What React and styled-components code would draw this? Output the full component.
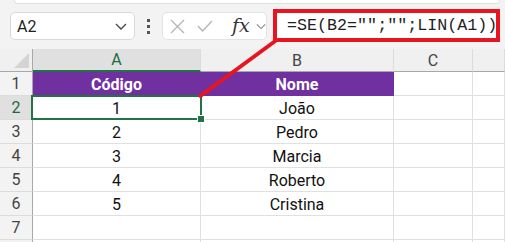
import React from "react";
import styled, { createGlobalStyle } from "styled-components";

const GlobalStyle = createGlobalStyle`
  body {
    margin: 0;
    background: #f3f3f3;
    font-family: Roboto, "Noto Sans", sans-serif;
  }
`;

const data = [
  { n: 1, a: "Código", b: "Nome", head: true },
  { n: 2, a: "1", b: "João", active: true },
  { n: 3, a: "2", b: "Pedro" },
  { n: 4, a: "3", b: "Marcia" },
  { n: 5, a: "4", b: "Roberto" },
  { n: 6, a: "5", b: "Cristina" },
  { n: 7, a: "", b: "" },
];

const Chevron = ({ w = 12, color = "#444" }) => (
  <svg width={w} height="7" viewBox="0 0 12 7">
    <polyline points="1,1 6,6 11,1" fill="none" stroke={color} strokeWidth="1.3" />
  </svg>
);

const App = () => {
  return (
    <Page>
      <GlobalStyle />
      <TopStrip />
      <Toolbar>
        <NameBox>
          <span>A2</span>
          <Chevron />
        </NameBox>
        <Dots>
          <i />
          <i />
          <i />
        </Dots>
        <FxBox>
          <svg width="15" height="15" viewBox="0 0 15 15">
            <path d="M1 1 L14 14 M14 1 L1 14" stroke="#b4b4b4" strokeWidth="1.3" />
          </svg>
          <svg width="16" height="12" viewBox="0 0 16 12" style={{ marginLeft: 12 }}>
            <polyline points="1,6 5.5,11 15,1" fill="none" stroke="#b4b4b4" strokeWidth="1.3" />
          </svg>
          <FxLabel>fx</FxLabel>
          <Chevron w={10} color="#888" />
        </FxBox>
        <FormulaBox>=SE(B2="";"";LIN(A1))</FormulaBox>
      </Toolbar>

      <Sheet>
        <Corner />
        <ColHead $active>A</ColHead>
        <ColHead>B</ColHead>
        <ColHead>C</ColHead>
        <ColHead />
        {data.map((r) => (
          <React.Fragment key={r.n}>
            <RowHead $active={r.active}>{r.n}</RowHead>
            <Cell $head={r.head} $selected={r.active}>
              {r.a}
            </Cell>
            <Cell $head={r.head}>{r.b}</Cell>
            <Cell />
            <Cell />
          </React.Fragment>
        ))}
        <RowHead />
        <Cell />
        <Cell />
        <Cell />
        <Cell />
      </Sheet>

      <Pointer width="505" height="242">
        <line x1="199" y1="97" x2="278" y2="39" stroke="#e8141f" strokeWidth="4" />
      </Pointer>
    </Page>
  );
};

export default App;

const Page = styled.div`
  position: relative;
  width: 505px;
  height: 242px;
  overflow: hidden;
  background: #f3f3f3;
`;

const TopStrip = styled.div`
  height: 3px;
  margin: 0 5px 0 14px;
  background: #fff;
  border: 1px solid #e0e0e0;
  border-top: none;
  border-radius: 0 0 5px 5px;
`;

const Toolbar = styled.div`
  display: flex;
  align-items: flex-start;
  height: 45px;
  box-sizing: border-box;
  padding: 8px 0 0 10px;
`;

const NameBox = styled.div`
  box-sizing: border-box;
  width: 125px;
  height: 28px;
  display: flex;
  align-items: center;
  justify-content: space-between;
  padding: 0 7px 0 6px;
  background: #fff;
  border: 1px solid #d9d9d9;
  border-radius: 5px;
  font-size: 16px;
  color: #1f1f1f;
`;

const Dots = styled.div`
  display: flex;
  flex-direction: column;
  gap: 3px;
  margin: 7px 12px 0;
  i {
    display: block;
    width: 3px;
    height: 3px;
    background: #555;
  }
`;

const FxBox = styled.div`
  box-sizing: border-box;
  width: 105px;
  height: 28px;
  display: flex;
  align-items: center;
  padding-left: 7px;
  background: #fff;
  border: 1px solid #e3e3e3;
  border-radius: 5px;
`;

const FxLabel = styled.span`
  font-family: "DejaVu Serif", "Liberation Serif", serif;
  font-style: italic;
  font-size: 19px;
  color: #333;
  margin: -3px 6px 0 19px;
`;

const FormulaBox = styled.div`
  box-sizing: border-box;
  width: 227px;
  height: 33px;
  margin: -3px 0 0 6px;
  padding-left: 10px;
  display: flex;
  align-items: center;
  background: #fff;
  border: 4px solid #e8141f;
  font-family: "Liberation Mono", "DejaVu Sans Mono", monospace;
  font-size: 16.7px;
  color: #1f1f1f;
  white-space: nowrap;
`;

const Sheet = styled.div`
  display: grid;
  grid-template-columns: 33px 168px 193px 79px 32px;
  grid-template-rows: 23px;
  grid-auto-rows: 24px;
  background: #fff;
  font-size: 16px;
`;

const HeadBase = styled.div`
  box-sizing: border-box;
  display: flex;
  align-items: center;
  justify-content: center;
  color: #444;
  font-size: 16px;
`;

const Corner = styled(HeadBase)`
  position: relative;
  background: #f0f0f0;
  border-right: 1px solid #a8a8a8;
  border-bottom: 1px solid #a8a8a8;
  &::after {
    content: "";
    position: absolute;
    right: 3px;
    bottom: 3px;
    border-style: solid;
    border-width: 0 0 15px 15px;
    border-color: transparent transparent #d4d4d4 transparent;
  }
`;

const ColHead = styled(HeadBase)`
  background: ${(p) => (p.$active ? "#e0e0e0" : "#f0f0f0")};
  color: ${(p) => (p.$active ? "#1e6b40" : "#444")};
  border-right: 1px solid #dcdcdc;
  border-bottom: ${(p) => (p.$active ? "2px solid #217346" : "1px solid #a8a8a8")};
`;

const RowHead = styled(HeadBase)`
  background: ${(p) => (p.$active ? "#e0e0e0" : "#f3f3f3")};
  color: ${(p) => (p.$active ? "#1e6b40" : "#444")};
  border-right: 1px solid #a8a8a8;
  border-bottom: 1px solid #dcdcdc;
`;

const Cell = styled.div`
  position: relative;
  box-sizing: border-box;
  display: flex;
  align-items: center;
  justify-content: center;
  padding-top: 1px;
  border-right: 1px solid ${(p) => (p.$head ? "#7030a0" : "#e0e0e0")};
  border-bottom: 1px solid ${(p) => (p.$head ? "#7030a0" : "#e0e0e0")};
  background: ${(p) => (p.$head ? "#7030a0" : "#fff")};
  color: ${(p) => (p.$head ? "#fff" : "#111")};
  font-weight: ${(p) => (p.$head ? 700 : 400)};

  ${(p) =>
    p.$selected &&
    `
    &::before {
      content: "";
      position: absolute;
      top: -1px;
      left: -2px;
      right: -2px;
      bottom: -1px;
      border: 2px solid #217346;
      z-index: 2;
    }
    &::after {
      content: "";
      position: absolute;
      right: -5px;
      bottom: -4px;
      width: 6px;
      height: 6px;
      background: #217346;
      border: 1px solid #fff;
      z-index: 3;
    }
  `}
`;

const Pointer = styled.svg`
  position: absolute;
  left: 0;
  top: 0;
  pointer-events: none;
  z-index: 5;
`;
